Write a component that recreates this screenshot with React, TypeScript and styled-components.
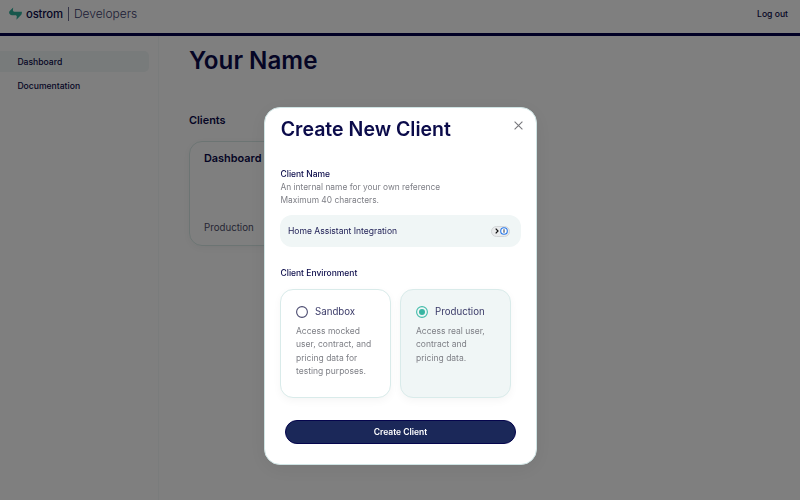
import React from "react";
import styled, { createGlobalStyle } from "styled-components";

const GlobalStyle = createGlobalStyle`
  * { box-sizing: border-box; }
  html, body { margin: 0; height: 100%; overflow: hidden; }
  body { font-family: Inter, "Liberation Sans", sans-serif; color: #0b0b4a; background: #fff; }
  h1, h2, h3, p { margin: 0; }
  button { font-family: inherit; }
`;

const Page = styled.div`
  height: 500px;
  display: flex;
  flex-direction: column;
`;
const Header = styled.header`
  height: 36px;
  flex: none;
  display: flex;
  justify-content: space-between;
  padding: 0 12px 0 9px;
  border-bottom: 3px solid #02004a;
`;
const Brand = styled.div`
  display: flex;
  align-items: center;
  height: 27px;
`;
const BrandName = styled.span`
  margin-left: 4px;
  font-size: 11.3px;
  font-weight: 500;
  letter-spacing: -0.15px;
`;
const Divider = styled.span`
  width: 1px;
  height: 14px;
  margin: 0 5px;
  background: #6b6b90;
`;
const Product = styled.span`
  font-size: 12px;
  font-weight: 300;
  color: #3b3b6c;
`;
const Logout = styled.a`
  font-size: 8.6px;
  font-weight: 500;
  line-height: 28px;
`;
const Body = styled.div`
  flex: 1;
  display: flex;
`;
const Sidebar = styled.nav`
  width: 159px;
  padding-top: 15px;
  border-right: 1px solid #f5f8f8;
`;
const NavItem = styled.a<{ $active?: boolean }>`
  display: block;
  width: 149px;
  height: 21px;
  margin-bottom: 3px;
  padding: 1px 0 0 17.4px;
  border-radius: 0 5px 5px 0;
  font-size: 8.6px;
  font-weight: 500;
  line-height: 20px;
  background: ${(p) => (p.$active ? "#f0f6f6" : "transparent")};
`;
const Main = styled.main`
  padding: 9px 0 0 30px;
`;
const PageTitle = styled.h1`
  font-size: 24.2px;
  font-weight: 600;
  line-height: 31px;
`;
const SectionTitle = styled.h2`
  margin-top: 37px;
  font-size: 10.9px;
  font-weight: 600;
  line-height: 15px;
`;
const ClientCard = styled.section`
  width: 160px;
  height: 105px;
  margin-top: 13px;
  padding: 9px 14px 10px;
  display: flex;
  flex-direction: column;
  justify-content: space-between;
  border: 1px solid #d8e9e7;
  border-radius: 13px;
  box-shadow: 0 2px 10px rgba(0, 0, 0, 0.05);
`;
const CardTitle = styled.h3`
  font-size: 10.9px;
  font-weight: 600;
  line-height: 14px;
`;
const CardEnvironment = styled.span`
  font-size: 9.7px;
  line-height: 15px;
  color: #4d4d69;
`;

const Overlay = styled.div`
  position: fixed;
  inset: 0;
  padding: 107px 0 0 264px;
  background: rgba(0, 0, 0, 0.5);
`;
const Dialog = styled.div`
  width: 273px;
  height: 358px;
  padding: 8px 16px 0;
  border: 1px solid #cfe4e4;
  border-radius: 16px;
  background: #fff;
  box-shadow: 0 4px 20px rgba(0, 0, 0, 0.07);
`;
const DialogHeader = styled.div`
  display: flex;
  justify-content: space-between;
  height: 52px;
`;
const DialogTitle = styled.h2`
  font-size: 19.55px;
  font-weight: 600;
  line-height: 26px;
  margin-left: -0.3px;
  white-space: nowrap;
`;
const CloseButton = styled.button`
  width: 9px;
  height: 9px;
  margin: 5px -3px 0 0;
  padding: 0;
  border: 0;
  background: none;
  svg { display: block; }
`;
const Label = styled.div`
  margin-left: -0.5px;
  font-size: 8.5px;
  font-weight: 500;
  line-height: 13px;
`;
const Hint = styled.p`
  margin-left: -0.5px;
  font-size: 8.4px;
  line-height: 12.5px;
  color: #7e7f86;
`;
const InputBox = styled.div`
  display: flex;
  align-items: center;
  justify-content: space-between;
  width: 241px;
  height: 32px;
  margin: 9px 0 20px -1px;
  padding: 0 11px 0 8px;
  border-radius: 12px;
  font-size: 8.55px;
  color: #1c1c53;
  background: #f0f6f6;
`;
const Autofill = styled.span`
  display: flex;
  align-items: center;
  justify-content: space-between;
  width: 19px;
  height: 11px;
  padding: 0 1px 0 3px;
  border-radius: 6px;
  border: 1px solid #d3d6d8;
  background: #e9ebec;
`;
const Options = styled.div`
  display: flex;
  gap: 9px;
  margin: 9px 0 22px -1px;
`;
const Option = styled.div<{ $selected?: boolean }>`
  width: 111px;
  height: 109px;
  padding: 15px 14px 0 15px;
  border: 1px solid #d9ebea;
  border-radius: 13px;
  background: ${(p) => (p.$selected ? "#f0f6f6" : "#fff")};
  box-shadow: 0 3px 9px rgba(0, 0, 0, 0.04);
`;
const OptionHeading = styled.div`
  display: flex;
  align-items: center;
  gap: 7px;
  height: 13px;
  margin-bottom: 7px;
  font-size: 9.7px;
  color: #3a3a68;
`;
const OptionText = styled.p`
  font-size: 8.5px;
  line-height: 13.3px;
  color: #7f8087;
  white-space: pre-line;
`;
const SubmitButton = styled.button`
  display: block;
  width: 231px;
  height: 24px;
  margin-left: 4px;
  border: 1px solid #05054d;
  border-radius: 12px;
  background: #1b2859;
  color: #fff;
  font-size: 8.5px;
  font-weight: 600;
  padding: 0;
`;

const Logo = () => (
  <svg width="13" height="13" viewBox="0 0 13 13" fill="#2eae99">
    <path d="M4.2.6 3.9 3c0 1 .5 1.7 1.5 1.7h7.5c0 2-.3 2.8-1.1 3.6L7.4 12.7l.4-3c0-1-.5-1.5-1.5-1.5H3.1C1.3 8.2.1 7 .1 5.6c0-.8.3-1.3.8-1.8Z" />
  </svg>
);

const Radio = ({ checked = false }: { checked?: boolean }) => (
  <svg width="12" height="12" viewBox="0 0 12 12" fill="none">
    <circle cx="6" cy="6" r="5.4" stroke={checked ? "#43bcaa" : "#4b4b70"} strokeWidth="1.1" />
    {checked && <circle cx="6" cy="6" r="3" fill="#38b5a2" />}
  </svg>
);

const environments = [
  { name: "Sandbox", text: "Access mocked\nuser, contract, and\npricing data for\ntesting purposes.", selected: false },
  { name: "Production", text: "Access real user,\ncontract and\npricing data.", selected: true },
];

export default function App() {
  return (
    <>
      <GlobalStyle />
      <Page>
        <Header>
          <Brand>
            <Logo />
            <BrandName>ostrom</BrandName>
            <Divider />
            <Product>Developers</Product>
          </Brand>
          <Logout>Log out</Logout>
        </Header>
        <Body>
          <Sidebar>
            <NavItem $active>Dashboard</NavItem>
            <NavItem>Documentation</NavItem>
          </Sidebar>
          <Main>
            <PageTitle>Your Name</PageTitle>
            <SectionTitle>Clients</SectionTitle>
            <ClientCard>
              <CardTitle>Dashboard</CardTitle>
              <CardEnvironment>Production</CardEnvironment>
            </ClientCard>
          </Main>
        </Body>
      </Page>
      <Overlay>
        <Dialog role="dialog">
          <DialogHeader>
            <DialogTitle>Create New Client</DialogTitle>
            <CloseButton aria-label="Close">
              <svg width="9" height="9" viewBox="0 0 9 9">
                <path d="m.6.6 7.8 7.8M8.4.6.6 8.4" stroke="#77777c" strokeWidth="1.1" />
              </svg>
            </CloseButton>
          </DialogHeader>
          <Label>Client Name</Label>
          <Hint>An internal name for your own reference</Hint>
          <Hint>Maximum 40 characters.</Hint>
          <InputBox>
            Home Assistant Integration
            <Autofill>
              <svg width="4" height="6" viewBox="0 0 4 6" fill="none">
                <path d="m.7.7 2.3 2.3L.7 5.3" stroke="#111" strokeWidth="1.2" />
              </svg>
              <svg width="8" height="8" viewBox="0 0 8 8" fill="none">
                <circle cx="4" cy="4" r="3.3" fill="#fff" stroke="#2878e8" strokeWidth="1.1" />
                <path d="M4 2.3v3.4" stroke="#34445c" strokeWidth="1.1" />
              </svg>
            </Autofill>
          </InputBox>
          <Label>Client Environment</Label>
          <Options>
            {environments.map((env) => (
              <Option key={env.name} $selected={env.selected}>
                <OptionHeading>
                  <Radio checked={env.selected} />
                  {env.name}
                </OptionHeading>
                <OptionText>{env.text}</OptionText>
              </Option>
            ))}
          </Options>
          <SubmitButton>Create Client</SubmitButton>
        </Dialog>
      </Overlay>
    </>
  );
}
